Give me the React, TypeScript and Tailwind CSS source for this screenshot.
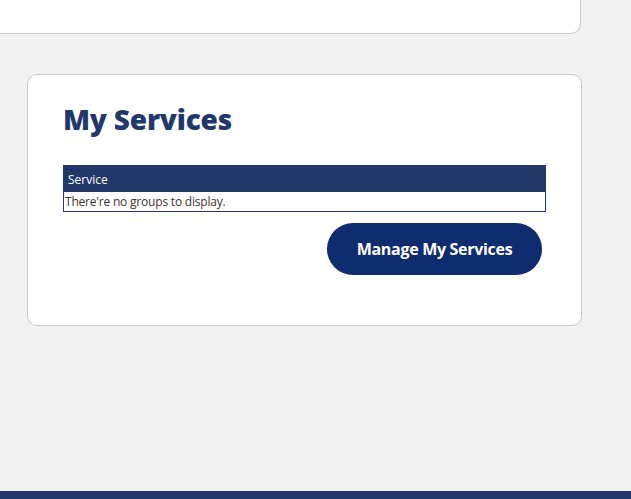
import React from "react"

const ServicesCard = () => {
  return (
    <div className="ml-[27px] w-[555px] h-[252px] bg-white border border-[#c9c9c9] rounded-[10px] pt-[24px] pl-[35px] pr-[35px]">
      <h2 className="font-['Open_Sans',sans-serif] font-extrabold text-[28px] leading-[40px] text-[#22386a] tracking-[-0.2px]">
        My Services
      </h2>

      <table className="w-full mt-[26px] border-collapse border border-[#22386a] font-['Open_Sans',sans-serif] text-[12px]">
        <thead>
          <tr className="bg-[#22386a] text-white">
            <th className="text-left font-normal h-[26px] pl-[4px] pt-[2px]">Service</th>
          </tr>
        </thead>
        <tbody>
          <tr>
            <td className="h-[20px] pl-[1px] text-[#3b3330] leading-[17px] tracking-[-0.2px]">
              There're no groups to display.
            </td>
          </tr>
        </tbody>
      </table>

      <div className="flex justify-end mt-[11px] pr-[4px]">
        <button className="w-[215px] h-[52px] rounded-full bg-[#0f2d6e] text-white font-['Open_Sans',sans-serif] font-bold text-[16px] tracking-[-0.3px]">
          Manage My Services
        </button>
      </div>
    </div>
  )
}

export default function App() {
  return (
    <div className="w-[631px] h-[499px] bg-[#f2f2f2] flex flex-col overflow-hidden">
      <div className="-ml-[20px] w-[601px] h-[34px] bg-white border border-t-0 border-[#c9c9c9] rounded-b-[10px] shrink-0" />
      <div className="mt-[40px]">
        <ServicesCard />
      </div>
      <div className="mt-auto h-[8px] bg-[#22386a] shrink-0" />
    </div>
  )
}
